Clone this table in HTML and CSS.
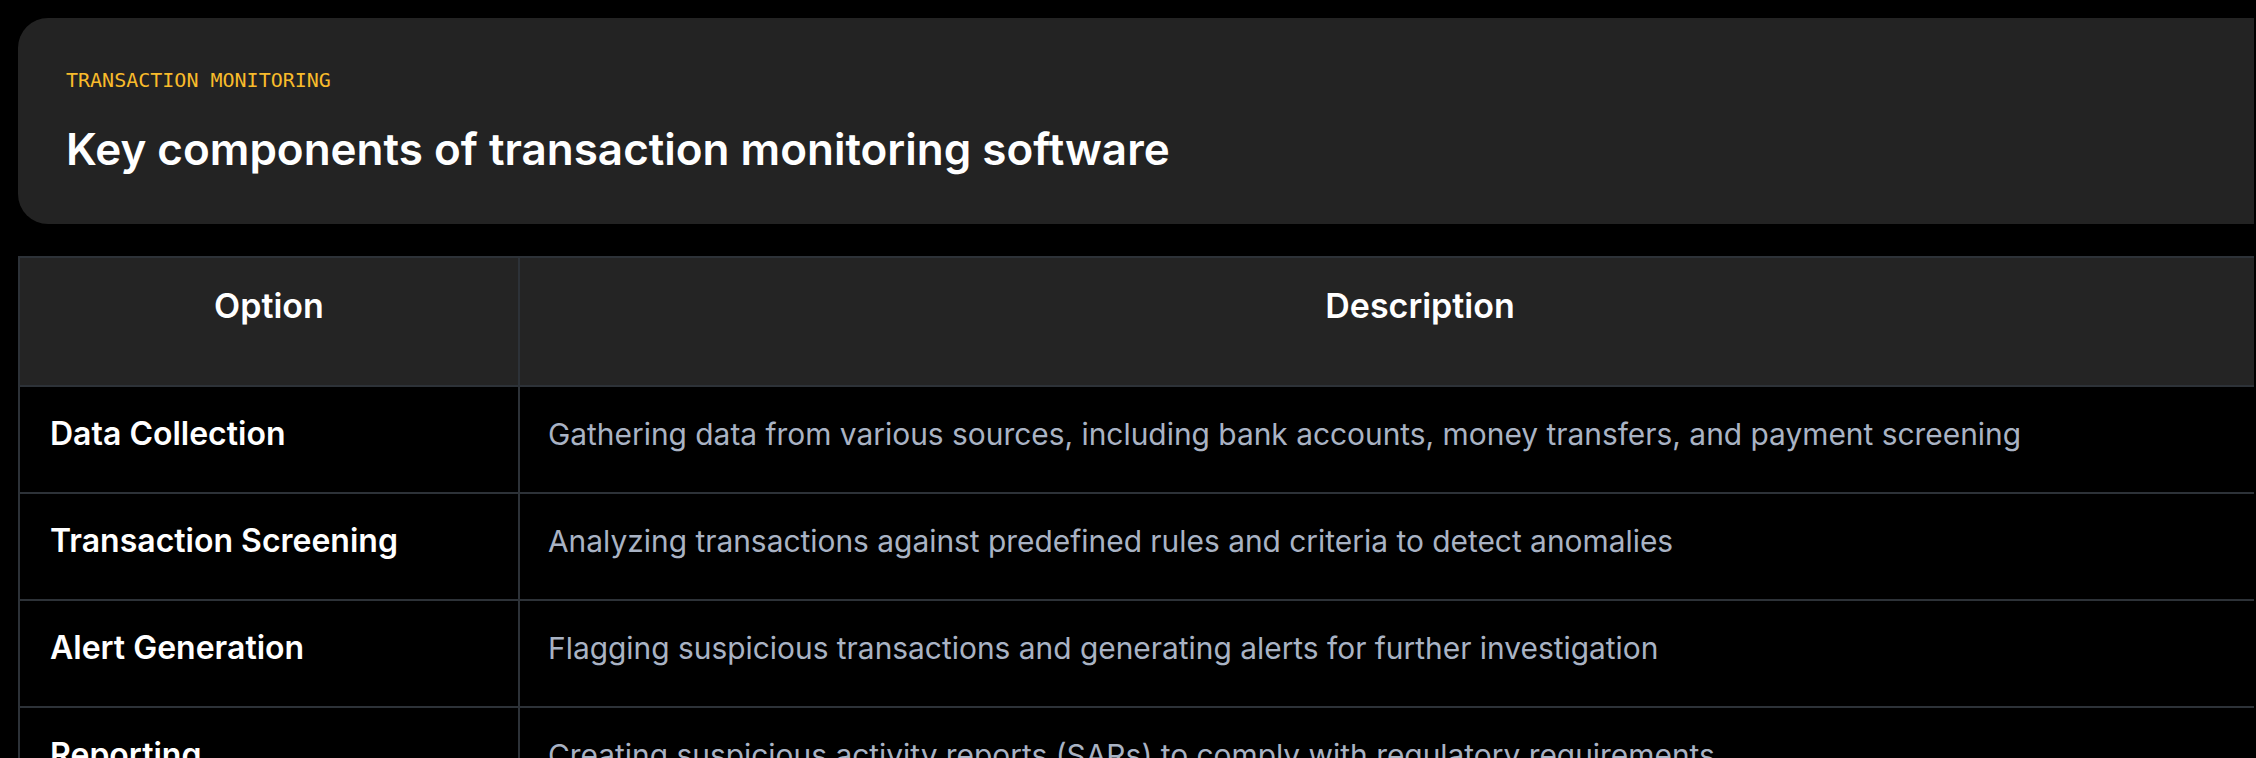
FILE: index.html
```html
<!DOCTYPE html>
<html lang="en">
<head>
  <meta charset="UTF-8" />
  <meta name="viewport" content="width=device-width, initial-scale=1.0" />
  <title>Transaction Monitoring</title>
  <link rel="stylesheet" href="styles.css">
</head>
<body>
  <div class="clip">
    <div class="content">
      <div class="intro">
        <div class="eyebrow">TRANSACTION MONITORING</div>
        <h1>Key components of transaction monitoring software</h1>
      </div>

      <table class="components">
        <colgroup>
          <col class="col-option">
          <col>
        </colgroup>
        <thead>
          <tr>
            <th>Option</th>
            <th>Description</th>
          </tr>
        </thead>
        <tbody>
          <tr>
            <td class="option">Data Collection</td>
            <td>Gathering data from various sources, including bank accounts, money transfers, and payment screening</td>
          </tr>
          <tr>
            <td class="option">Transaction Screening</td>
            <td>Analyzing transactions against predefined rules and criteria to detect anomalies</td>
          </tr>
          <tr>
            <td class="option">Alert Generation</td>
            <td>Flagging suspicious transactions and generating alerts for further investigation</td>
          </tr>
          <tr>
            <td class="option">Reporting</td>
            <td>Creating suspicious activity reports (SARs) to comply with regulatory requirements</td>
          </tr>
        </tbody>
      </table>
    </div>
  </div>
</body>
</html>
```

FILE: styles.css
```css
body {
  margin: 0;
  padding: 0;
  background-color: #000;
  color: #fff;
  font-family: Inter, 'Noto Sans', sans-serif;
  overflow: hidden;
}

.clip {
  margin-right: 2px;
  overflow: hidden;
}

.content {
  width: 2304px;
  padding: 18px 0 0 18px;
}

.intro {
  background: #232323;
  border-radius: 30px;
  padding: 48px 48px 48px;
}

.eyebrow {
  font-family: 'DejaVu Sans Mono', 'Liberation Mono', monospace;
  font-size: 20px;
  line-height: 28px;
  color: #f8bb2b;
}

h1 {
  margin: 29px 0 0;
  font-size: 44px;
  line-height: 53px;
  font-weight: 600;
}

.components {
  width: 2304px;
  margin-top: 32px;
  border-collapse: collapse;
  table-layout: fixed;
}

.col-option {
  width: 500px;
}

.components th,
.components td {
  border: 2px solid #2d3238;
  text-align: left;
  vertical-align: top;
}

.components th {
  background: #242424;
  text-align: center;
  font-size: 34px;
  line-height: 48px;
  font-weight: 600;
  padding: 24px 30px 55px;
}

.components td {
  font-size: 29.9px;
  line-height: 48px;
  color: #a9b3c4;
  padding: 23px 30px 34px 28px;
}

.components td.option {
  font-size: 32px;
  font-weight: 600;
  color: #fff;
  padding-left: 30px;
}
```
